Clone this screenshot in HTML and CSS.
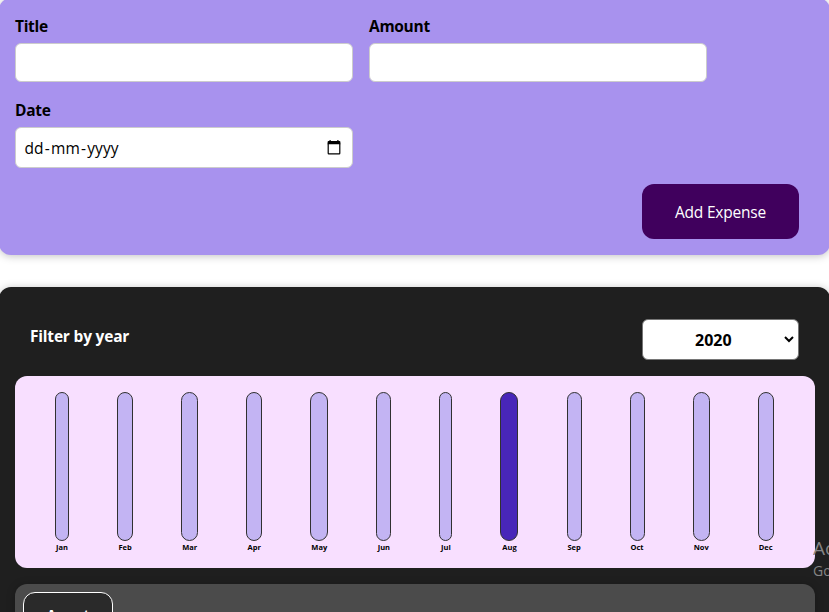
FILE: index.html
```html
<!DOCTYPE html>
<html lang="en">
<head>
<meta charset="utf-8">
<title>Expenses</title>
<link rel="stylesheet" href="styles.css">
</head>
<body>
<main class="page">
  <section class="new-expense">
    <form>
      <div class="controls">
        <div class="control"><label for="title">Title</label><input id="title" type="text"></div>
        <div class="control"><label for="amount">Amount</label><input id="amount" type="text"></div>
        <div class="control">
          <label>Date</label>
          <div class="date-field"><span>dd<s>-</s>mm<s>-</s>yyyy</span>
            <svg width="14" height="15" viewBox="0 0 14 15"><path d="M1.2 3.5v9.8q0 .6.6.6h10.4q.6 0 .6-.6V3.5" fill="none" stroke="#000" stroke-width="1.2"/><path d="M.6 2q0-1 1-1h.9V0h1.2v1h6.6V0h1.2v1h.9q1 0 1 1v2.2H.6z"/></svg>
          </div>
        </div>
      </div>
      <div class="actions"><button type="button">Add Expense</button></div>
    </form>
  </section>
  <section class="expenses">
    <div class="filter">
      <span class="filter-label">Filter by year</span>
      <div class="year"><span>2020</span>
        <svg width="10" height="7" viewBox="0 0 10 7"><path d="M1 1l4 4 4-4" fill="none" stroke="#000" stroke-width="2"/></svg>
      </div>
    </div>
    <div class="chart">
      <div class="month jan"><i></i><b>Jan</b></div>
      <div class="month feb"><i></i><b>Feb</b></div>
      <div class="month mar"><i></i><b>Mar</b></div>
      <div class="month apr"><i></i><b>Apr</b></div>
      <div class="month may"><i></i><b>May</b></div>
      <div class="month jun"><i></i><b>Jun</b></div>
      <div class="month jul"><i></i><b>Jul</b></div>
      <div class="month aug full"><i></i><b>Aug</b></div>
      <div class="month sep"><i></i><b>Sep</b></div>
      <div class="month oct"><i></i><b>Oct</b></div>
      <div class="month nov"><i></i><b>Nov</b></div>
      <div class="month dec"><i></i><b>Dec</b></div>
    </div>
    <div class="item"><div class="item-date">August</div></div>
  </section>
</main>
<div class="watermark"><p class="mark-title">Activate Windows</p><p class="mark-sub">Go to Settings to activate Windows.</p></div>
</body>
</html>
```
FILE: styles.css
```css
* { box-sizing: border-box; }
html, body { height: 100%; }
body {
  margin: 0;
  overflow: hidden;
  background: #fff;
  font-family: "Open Sans", "Noto Sans", sans-serif;
  font-size: 16px;
}
.page { width: 831px; height: 612px; margin-left: -1px; overflow: hidden; }
.new-expense {
  height: 257px;
  margin-top: -2px;
  padding: 18px 16px 16px;
  background: #a892ee;
  border-radius: 12px;
  box-shadow: 0 1px 8px rgba(0, 0, 0, .25);
}
.controls { display: flex; flex-wrap: wrap; gap: 18px 16px; }
.control { width: 338px; }
.control label {
  display: block;
  height: 19px;
  margin-bottom: 8px;
  line-height: 20px;
  font-size: 15.5px;
  font-weight: 700;
  letter-spacing: -.3px;
}
.control input, .date-field {
  display: block;
  width: 100%;
  height: 39px;
  padding: 0 9px;
  border: 1px solid #ccc;
  border-radius: 6px;
  background: #fff;
}
.control .date-field {
  display: flex;
  height: 41px;
  padding: 0 11px 0 8.5px;
  align-items: center;
  justify-content: space-between;
  font-size: 15.5px;
}
.date-field s { margin: 0 1.3px; text-decoration: none; }
.actions { display: flex; justify-content: flex-end; margin: 16px 15px 0 0; }
.actions button {
  width: 157px;
  height: 55px;
  padding: 0;
  border: 0;
  border-radius: 12px;
  background: #40005d;
  color: #fff;
  font: 15.5px "Open Sans", sans-serif;
  letter-spacing: -.2px;
}
.expenses {
  height: 420px;
  margin-top: 32px;
  padding: 32px 15px 0 16px;
  background: #1f1f1f;
  border-radius: 12px;
  box-shadow: 0 1px 8px rgba(0, 0, 0, .25);
}
.filter {
  display: flex;
  height: 41px;
  padding: 0 16px 0 15px;
  justify-content: space-between;
}
.filter-label {
  color: #fff;
  font-size: 15.5px;
  font-weight: 700;
  line-height: 35px;
  letter-spacing: -.2px;
}
.year {
  display: flex;
  width: 157px;
  padding: 0 4px 0 52px;
  align-items: center;
  justify-content: space-between;
  border: 1px solid #767676;
  border-radius: 6px;
  background: #fff;
  font-weight: 700;
}
.chart {
  display: flex;
  height: 192px;
  margin-top: 16px;
  padding: 16px 17.2px 16px 16px;
  justify-content: space-around;
  border-radius: 12px;
  background: #f8dfff;
}
.month { display: flex; flex-direction: column; align-items: center; }
.month i {
  flex-shrink: 0;
  width: 100%;
  height: 149px;
  border: 1px solid #313131;
  border-radius: 12px;
  background: #c3b4f3;
}
.full i { background: #4826b9; }
.month b { font-size: 7.5px; line-height: 13px; white-space: nowrap; }
.jul { width: 13px; }
.jan { width: 14px; }
.jun, .sep, .oct { width: 15px; }
.feb, .apr, .dec { width: 16px; }
.mar, .nov { width: 17px; }
.may, .aug { width: 18px; }
.item {
  height: 100px;
  margin-top: 16px;
  padding: 8px;
  border-radius: 12px;
  background: #4b4b4b;
  box-shadow: 0 1px 8px rgba(0, 0, 0, .25);
}
.item-date {
  width: 90px;
  height: 80px;
  padding-top: 10px;
  border: 1px solid #fff;
  border-radius: 12px;
  background: #2a2a2a;
  color: #fff;
  font-size: 12.8px;
  font-weight: 700;
  line-height: 22px;
  letter-spacing: -.5px;
  text-align: center;
}
.watermark {
  position: absolute;
  left: 813px;
  top: 536px;
  width: 16px;
  overflow: hidden;
  color: #858585;
  white-space: nowrap;
}
.watermark p { margin: 0; }
.mark-title { font-size: 19px; line-height: 25px; }
.mark-sub { font-size: 14px; line-height: 20px; }
```
